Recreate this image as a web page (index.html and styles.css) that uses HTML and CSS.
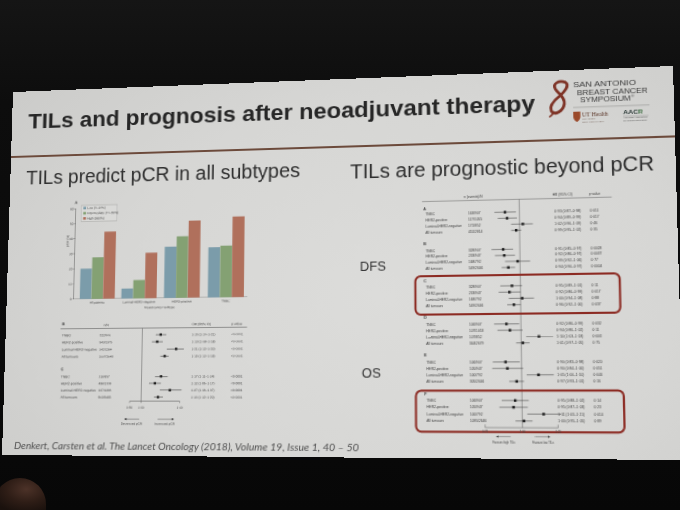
FILE: index.html
```html
<!DOCTYPE html>
<html lang="en">
<head>
<meta charset="utf-8">
<title>TILs and prognosis after neoadjuvant therapy</title>
<link rel="stylesheet" href="styles.css">
</head>
<body>
<div class="slide">
  <div class="header">
    <div class="title">TILs and prognosis after neoadjuvant therapy</div>
    <svg class="logo" viewBox="0 0 92 45">
      <path class="eight" d="M15.5 3 C9 0 3.5 4 6 9 C8.5 14 15 17 14 24 C13 31 5 35.5 2 30.5 C0 26 5 20 10 16 C14 12.5 19.5 6 15.5 3"/>
      <path class="eight-tail" d="M4.5 31.5 C3 34 1.5 35.5 0.5 36"/>
      <text class="lg" x="22.4" y="7.8" textLength="57" lengthAdjust="spacingAndGlyphs">SAN ANTONIO</text>
      <text class="lg" x="25.8" y="15.6" textLength="64" lengthAdjust="spacingAndGlyphs">BREAST CANCER</text>
      <text class="lg" x="28.4" y="23.4" textLength="46" lengthAdjust="spacingAndGlyphs">SYMPOSIUM</text>
      <text class="reg" x="75" y="19.6">®</text>
      <line class="sep" x1="22" y1="27.8" x2="91" y2="27.8"/>
      <path class="shield" d="M22 32 H28.5 V37 C28.5 40 25.25 42 25.25 42 C25.25 42 22 40 22 37 Z"/>
      <text class="ut" x="30" y="37">UT Health</text>
      <text class="uts" x="30" y="39.8">San Antonio</text>
      <text class="uts" x="30" y="42.8">Mays Cancer Center</text>
      <text class="aacr" x="67.2" y="36.3">AAC<tspan class="aacr-r">R</tspan></text>
      <line class="sep2" x1="67" y1="38" x2="90" y2="38"/>
      <text class="aacs" x="67.2" y="40.5">American Association</text>
      <text class="aacs" x="67.2" y="43">for Cancer Research</text>
    </svg>
  </div>
  <div class="rule"></div>
  <div class="columns">
    <div class="col col-left">
      <div class="subtitle">TILs predict pCR in all subtypes</div>
      <svg class="fig fig-left" viewBox="60 195 220 240" preserveAspectRatio="none">
        <text class="pl" x="71.5" y="202.3">A</text>
        <rect class="legend" x="78.3" y="204" width="37" height="16.4"/>
        <rect class="b1" x="80.5" y="205.5" width="2.8" height="2.6"/>
        <text class="lt" x="84.5" y="207.9">Low (0–10%)</text>
        <rect class="b2" x="80.5" y="210.8" width="2.8" height="2.6"/>
        <text class="lt" x="84.5" y="213.2">Intermediate (11–59%)</text>
        <rect class="b3" x="80.5" y="216.1" width="2.8" height="2.6"/>
        <text class="lt" x="84.5" y="218.5">High (≥60%)</text>

        <path class="ax" d="M72.7 207.3 V299.3 H247 M71.5 299.3 H72.7 M71.5 284 H72.7 M71.5 268.6 H72.7 M71.5 253.3 H72.7 M71.5 238 H72.7 M71.5 222.6 H72.7 M71.5 207.3 H72.7"/>
        <g class="yt">
          <text x="70.6" y="300.5">0</text>
          <text x="70.6" y="285.2">10</text>
          <text x="70.6" y="269.8">20</text>
          <text x="70.6" y="254.5">30</text>
          <text x="70.6" y="239.2">40</text>
          <text x="70.6" y="223.8">50</text>
          <text x="70.6" y="208.5">60</text>
        </g>
        <text class="lt" transform="translate(66.2 240) rotate(-90)" text-anchor="middle">pCR (%)</text>

        <rect class="b1" x="79" y="268.63" width="11.8" height="30.67"/>
        <rect class="b2" x="90.9" y="257.29" width="11.6" height="42.01"/>
        <rect class="b3" x="102.7" y="231.37" width="11.9" height="67.93"/>
        <rect class="b1" x="121.3" y="289.33" width="11.8" height="9.97"/>
        <rect class="b2" x="133.2" y="280.9" width="11.6" height="18.4"/>
        <rect class="b3" x="145" y="253.61" width="11.9" height="45.69"/>
        <rect class="b1" x="164.3" y="247.93" width="11.8" height="51.37"/>
        <rect class="b2" x="176.2" y="237.66" width="11.6" height="61.64"/>
        <rect class="b3" x="188" y="222.02" width="11.9" height="77.28"/>
        <rect class="b1" x="208" y="249.31" width="11.8" height="49.99"/>
        <rect class="b2" x="219.9" y="247.93" width="11.6" height="51.37"/>
        <rect class="b3" x="231.7" y="218.95" width="11.9" height="80.35"/>

        <g class="xl">
          <text x="96.8" y="304">All patients</text>
          <text x="139.1" y="304">Luminal-HER2-negative</text>
          <text x="182.1" y="304">HER2-positive</text>
          <text x="225.8" y="304">TNBC</text>
          <text x="160" y="309.6">Breast cancer subtype</text>
        </g>

        <text class="pl" x="61.5" y="325.5">B</text>
        <text class="hd" x="104" y="326.7">n/N</text>
        <text class="hd" x="192.7" y="326.7">OR (95% CI)</text>
        <text class="hd" x="231.7" y="326.7">p value</text>
        <line class="ax" x1="60" y1="329.3" x2="247" y2="329.3"/>
        <line class="ax" x1="143.3" y1="329.3" x2="143.3" y2="401.7"/>

        <g transform="translate(0 335.7)"><text class="t" x="61.7" y="1.2">TNBC</text><text class="n" x="100" y="1.2">322/906</text><text class="n" x="192.7" y="1.2">1·15 (1·10–1·21)</text><text class="n" x="231.7" y="1.2">&lt;0·0001</text><line class="ci" x1="156.7" x2="167.3"/><rect class="mk" x="160.5" y="-1.2" width="2.4" height="2.4"/></g>
        <g transform="translate(0 342.7)"><text class="t" x="61.7" y="1.2">HER2-positive</text><text class="n" x="100" y="1.2">543/1375</text><text class="n" x="192.7" y="1.2">1·13 (1·08–1·18)</text><text class="n" x="231.7" y="1.2">&lt;0·0001</text><line class="ci" x1="153" x2="164"/><rect class="mk" x="157.1" y="-1.2" width="2.4" height="2.4"/></g>
        <g transform="translate(0 350)"><text class="t" x="61.7" y="1.2">Luminal-HER2-negative</text><text class="n" x="100" y="1.2">142/1364</text><text class="n" x="192.7" y="1.2">1·21 (1·12–1·30)</text><text class="n" x="231.7" y="1.2">&lt;0·0001</text><line class="ci" x1="168" x2="185"/><rect class="mk" x="176.1" y="-1.2" width="2.4" height="2.4"/></g>
        <g transform="translate(0 357)"><text class="t" x="61.7" y="1.2">All tumours</text><text class="n" x="100" y="1.2">1007/3645</text><text class="n" x="192.7" y="1.2">1·15 (1·12–1·18)</text><text class="n" x="231.7" y="1.2">&lt;0·0001</text><line class="ci" x1="161.7" x2="170"/><rect class="mk" x="164.8" y="-1.2" width="2.4" height="2.4"/></g>

        <text class="pl" x="61.5" y="371">C</text>
        <g transform="translate(0 377)"><text class="t" x="61.7" y="1.2">TNBC</text><text class="n" x="100" y="1.2">318/857</text><text class="n" x="192.7" y="1.2">1·17 (1·11–1·24)</text><text class="n" x="231.7" y="1.2">&lt;0·0001</text><line class="ci" x1="156.7" x2="169.3"/><rect class="mk" x="161.5" y="-1.2" width="2.4" height="2.4"/></g>
        <g transform="translate(0 383.8)"><text class="t" x="61.7" y="1.2">HER2-positive</text><text class="n" x="100" y="1.2">498/1338</text><text class="n" x="192.7" y="1.2">1·12 (1·06–1·17)</text><text class="n" x="231.7" y="1.2">&lt;0·0001</text><line class="ci" x1="150.7" x2="162.7"/><rect class="mk" x="155.5" y="-1.2" width="2.4" height="2.4"/></g>
        <g transform="translate(0 390.6)"><text class="t" x="61.7" y="1.2">Luminal-HER2-negative</text><text class="n" x="100" y="1.2">137/1288</text><text class="n" x="192.7" y="1.2">1·27 (1·18–1·37)</text><text class="n" x="231.7" y="1.2">&lt;0·0001</text><line class="ci" x1="161.7" x2="183.3"/><rect class="mk" x="170.5" y="-1.2" width="2.4" height="2.4"/></g>
        <g transform="translate(0 397.4)"><text class="t" x="61.7" y="1.2">All tumours</text><text class="n" x="100" y="1.2">953/3483</text><text class="n" x="192.7" y="1.2">1·16 (1·12–1·20)</text><text class="n" x="231.7" y="1.2">&lt;0·0001</text><line class="ci" x1="156" x2="165"/><rect class="mk" x="158.8" y="-1.2" width="2.4" height="2.4"/></g>

        <path class="ax" d="M131.7 401.7 H181.7 M131.7 401.7 V403.2 M143.3 401.7 V403.2 M181.7 401.7 V403.2"/>
        <g class="xt">
          <text x="131.7" y="408.6">0·80</text>
          <text x="143.3" y="408.6">1·00</text>
          <text x="181.7" y="408.6">1·40</text>
        </g>
        <line class="ax" x1="128" y1="419" x2="141.7" y2="419"/>
        <polygon class="ah" points="126.5,419 129,417.9 129,420.1"/>
        <line class="ax" x1="160" y1="419" x2="175" y2="419"/>
        <polygon class="ah" points="176.5,419 174,417.9 174,420.1"/>
        <g class="xt">
          <text x="134" y="424.6">Decreased pCR</text>
          <text x="167" y="424.6">Increased pCR</text>
        </g>
      </svg>
      <div class="cite">Denkert, Carsten et al. The Lancet Oncology (2018), Volume 19, Issue 1, 40 – 50</div>
    </div>
    <div class="col col-right">
      <div class="subtitle">TILs are prognostic beyond pCR</div>
      <svg class="fig fig-right" viewBox="350 188 280 262" preserveAspectRatio="none">
        <text class="big" x="359" y="270">DFS</text>
        <text class="big" x="361" y="378">OS</text>

        <text class="rh" x="466" y="197.3">n (events)/N</text>
        <text class="rh" x="555" y="197.3">HR (95% CI)</text>
        <text class="rh" x="591" y="197.3">p value</text>
        <line class="ax" x1="423.3" y1="200" x2="613.3" y2="200"/>
        <line class="ax" x1="521.7" y1="200" x2="521.7" y2="427.3"/>

        <text class="rp" x="424.5" y="208.7">A</text>
        <g transform="translate(0 212.7)"><text class="r" x="426.7" y="1.3">TNBC</text><text class="r" x="470" y="1.3">163/907</text><text class="r" x="556.7" y="1.3">0·93 (0·87–0·98)</text><text class="r" x="591.7" y="1.3">0·011</text><line class="ci" x1="496.7" x2="518.3"/><rect class="mk" x="506" y="-1.3" width="2.6" height="2.6"/></g>
        <g transform="translate(0 218.9)"><text class="r" x="426.7" y="1.3">HER2-positive</text><text class="r" x="470" y="1.3">117/1055</text><text class="r" x="556.7" y="1.3">0·94 (0·89–0·99)</text><text class="r" x="591.7" y="1.3">0·017</text><line class="ci" x1="500" x2="519.3"/><rect class="mk" x="508" y="-1.3" width="2.6" height="2.6"/></g>
        <g transform="translate(0 225.1)"><text class="r" x="426.7" y="1.3">Luminal-HER2-negative</text><text class="r" x="470" y="1.3">171/852</text><text class="r" x="556.7" y="1.3">1·02 (0·96–1·09)</text><text class="r" x="591.7" y="1.3">0·46</text><line class="ci" x1="513.3" x2="535"/><rect class="mk" x="523.7" y="-1.3" width="2.6" height="2.6"/></g>
        <g transform="translate(0 231.3)"><text class="r" x="426.7" y="1.3">All tumours</text><text class="r" x="470" y="1.3">451/2814</text><text class="r" x="556.7" y="1.3">0·99 (0·95–1·02)</text><text class="r" x="591.7" y="1.3">0·35</text><line class="ci" x1="513.3" x2="523.3"/><rect class="mk" x="517" y="-1.3" width="2.6" height="2.6"/></g>

        <text class="rp" x="424.5" y="245">B</text>
        <g transform="translate(0 250.3)"><text class="r" x="426.7" y="1.3">TNBC</text><text class="r" x="470" y="1.3">328/907</text><text class="r" x="556.7" y="1.3">0·91 (0·85–0·97)</text><text class="r" x="591.7" y="1.3">0·0028</text><line class="ci" x1="493.3" x2="515"/><rect class="mk" x="503.7" y="-1.3" width="2.6" height="2.6"/></g>
        <g transform="translate(0 256.4)"><text class="r" x="426.7" y="1.3">HER2-positive</text><text class="r" x="470" y="1.3">233/947</text><text class="r" x="556.7" y="1.3">0·92 (0·86–0·97)</text><text class="r" x="591.7" y="1.3">0·0037</text><line class="ci" x1="496.7" x2="516.7"/><rect class="mk" x="504.7" y="-1.3" width="2.6" height="2.6"/></g>
        <g transform="translate(0 262.5)"><text class="r" x="426.7" y="1.3">Luminal-HER2-negative</text><text class="r" x="470" y="1.3">168/792</text><text class="r" x="556.7" y="1.3">0·99 (0·92–1·06)</text><text class="r" x="591.7" y="1.3">0·77</text><line class="ci" x1="506.7" x2="531.7"/><rect class="mk" x="518" y="-1.3" width="2.6" height="2.6"/></g>
        <g transform="translate(0 268.6)"><text class="r" x="426.7" y="1.3">All tumours</text><text class="r" x="470" y="1.3">549/2646</text><text class="r" x="556.7" y="1.3">0·94 (0·90–0·97)</text><text class="r" x="591.7" y="1.3">0·0004</text><line class="ci" x1="503.3" x2="516.7"/><rect class="mk" x="508.7" y="-1.3" width="2.6" height="2.6"/></g>

        <rect class="box" x="416" y="276" width="203.3" height="39" rx="5.5"/>
        <text class="rp" x="424.5" y="282">C</text>
        <g transform="translate(0 287)"><text class="r" x="426.7" y="1.3">TNBC</text><text class="r" x="470" y="1.3">328/907</text><text class="r" x="556.7" y="1.3">0·95 (0·89–1·01)</text><text class="r" x="591.7" y="1.3">0·11</text><line class="ci" x1="501.7" x2="523.3"/><rect class="mk" x="512" y="-1.3" width="2.6" height="2.6"/></g>
        <g transform="translate(0 293.3)"><text class="r" x="426.7" y="1.3">HER2-positive</text><text class="r" x="470" y="1.3">233/947</text><text class="r" x="556.7" y="1.3">0·92 (0·86–0·99)</text><text class="r" x="591.7" y="1.3">0·017</text><line class="ci" x1="500" x2="521.7"/><rect class="mk" x="509.4" y="-1.3" width="2.6" height="2.6"/></g>
        <g transform="translate(0 299.6)"><text class="r" x="426.7" y="1.3">Luminal-HER2-negative</text><text class="r" x="470" y="1.3">168/792</text><text class="r" x="556.7" y="1.3">1·00 (0·94–1·08)</text><text class="r" x="591.7" y="1.3">0·88</text><line class="ci" x1="510" x2="535"/><rect class="mk" x="522" y="-1.3" width="2.6" height="2.6"/></g>
        <g transform="translate(0 305.9)"><text class="r" x="426.7" y="1.3">All tumours</text><text class="r" x="470" y="1.3">549/2646</text><text class="r" x="556.7" y="1.3">0·96 (0·92–1·00)</text><text class="r" x="591.7" y="1.3">0·037</text><line class="ci" x1="508.3" x2="521.7"/><rect class="mk" x="513.7" y="-1.3" width="2.6" height="2.6"/></g>

        <text class="rp" x="424.5" y="319">D</text>
        <g transform="translate(0 325)"><text class="r" x="426.7" y="1.3">TNBC</text><text class="r" x="470" y="1.3">106/907</text><text class="r" x="556.7" y="1.3">0·92 (0·86–0·99)</text><text class="r" x="591.7" y="1.3">0·032</text><line class="ci" x1="495" x2="520"/><rect class="mk" x="506" y="-1.3" width="2.6" height="2.6"/></g>
        <g transform="translate(0 331.3)"><text class="r" x="426.7" y="1.3">HER2-positive</text><text class="r" x="470" y="1.3">107/1053</text><text class="r" x="556.7" y="1.3">0·94 (0·86–1·02)</text><text class="r" x="591.7" y="1.3">0·11</text><line class="ci" x1="498.3" x2="523.3"/><rect class="mk" x="509.4" y="-1.3" width="2.6" height="2.6"/></g>
        <g transform="translate(0 337.6)"><text class="r" x="426.7" y="1.3">Luminal-HER2-negative</text><text class="r" x="470" y="1.3">107/852</text><text class="r" x="556.7" y="1.3">1·10 (1·03–1·18)</text><text class="r" x="591.7" y="1.3">0·003</text><line class="ci" x1="526.7" x2="553.3"/><rect class="mk" x="538" y="-1.3" width="2.6" height="2.6"/></g>
        <g transform="translate(0 343.9)"><text class="r" x="426.7" y="1.3">All tumours</text><text class="r" x="470" y="1.3">344/2679</text><text class="r" x="556.7" y="1.3">1·01 (0·97–1·05)</text><text class="r" x="591.7" y="1.3">0·75</text><line class="ci" x1="516.7" x2="530"/><rect class="mk" x="522" y="-1.3" width="2.6" height="2.6"/></g>

        <text class="rp" x="424.5" y="356.7">E</text>
        <g transform="translate(0 362.7)"><text class="r" x="426.7" y="1.3">TNBC</text><text class="r" x="470" y="1.3">106/907</text><text class="r" x="556.7" y="1.3">0·90 (0·83–0·98)</text><text class="r" x="591.7" y="1.3">0·020</text><line class="ci" x1="493.3" x2="520"/><rect class="mk" x="504.7" y="-1.3" width="2.6" height="2.6"/></g>
        <g transform="translate(0 369.1)"><text class="r" x="426.7" y="1.3">HER2-positive</text><text class="r" x="470" y="1.3">105/947</text><text class="r" x="556.7" y="1.3">0·90 (0·84–1·00)</text><text class="r" x="591.7" y="1.3">0·051</text><line class="ci" x1="492.7" x2="523.3"/><rect class="mk" x="506.4" y="-1.3" width="2.6" height="2.6"/></g>
        <g transform="translate(0 375.5)"><text class="r" x="426.7" y="1.3">Luminal-HER2-negative</text><text class="r" x="470" y="1.3">100/792</text><text class="r" x="556.7" y="1.3">1·05 (1·00–1·10)</text><text class="r" x="591.7" y="1.3">0·044</text><line class="ci" x1="526.7" x2="553.3"/><rect class="mk" x="537" y="-1.3" width="2.6" height="2.6"/></g>
        <g transform="translate(0 381.9)"><text class="r" x="426.7" y="1.3">All tumours</text><text class="r" x="470" y="1.3">305/2646</text><text class="r" x="556.7" y="1.3">0·97 (0·93–1·01)</text><text class="r" x="591.7" y="1.3">0·16</text><line class="ci" x1="509.3" x2="524"/><rect class="mk" x="515.4" y="-1.3" width="2.6" height="2.6"/></g>

        <rect class="box" x="416" y="391" width="204.7" height="40.7" rx="5.5"/>
        <text class="rp" x="424.5" y="396">F</text>
        <g transform="translate(0 400.7)"><text class="r" x="426.7" y="1.3">TNBC</text><text class="r" x="470" y="1.3">106/907</text><text class="r" x="556.7" y="1.3">0·95 (0·88–1·02)</text><text class="r" x="591.7" y="1.3">0·14</text><line class="ci" x1="501.7" x2="528.3"/><rect class="mk" x="513.7" y="-1.3" width="2.6" height="2.6"/></g>
        <g transform="translate(0 407.3)"><text class="r" x="426.7" y="1.3">HER2-positive</text><text class="r" x="470" y="1.3">105/947</text><text class="r" x="556.7" y="1.3">0·95 (0·87–1·03)</text><text class="r" x="591.7" y="1.3">0·23</text><line class="ci" x1="499.3" x2="527.3"/><rect class="mk" x="512" y="-1.3" width="2.6" height="2.6"/></g>
        <g transform="translate(0 414)"><text class="r" x="426.7" y="1.3">Luminal-HER2-negative</text><text class="r" x="470" y="1.3">100/792</text><text class="r" x="556.7" y="1.3">1·11 (1·03–1·21)</text><text class="r" x="591.7" y="1.3">0·014</text><line class="ci" x1="526.7" x2="560"/><rect class="mk" x="541.4" y="-1.3" width="2.6" height="2.6"/></g>
        <g transform="translate(0 420.7)"><text class="r" x="426.7" y="1.3">All tumours</text><text class="r" x="470" y="1.3">1095/2646</text><text class="r" x="556.7" y="1.3">1·00 (0·95–1·05)</text><text class="r" x="591.7" y="1.3">0·89</text><line class="ci" x1="515" x2="531.7"/><rect class="mk" x="522" y="-1.3" width="2.6" height="2.6"/></g>

        <path class="ax" d="M485 424.3 V427.3 H556.7 V424.3"/>
        <g class="rt">
          <text x="485" y="432">0·75</text>
          <text x="521.7" y="432">1·00</text>
          <text x="556.7" y="432">1·25</text>
        </g>
        <line class="ax" x1="497" y1="436" x2="510" y2="436"/>
        <polygon class="ah" points="495.5,436 498,434.9 498,437.1"/>
        <line class="ax" x1="534" y1="436" x2="547.5" y2="436"/>
        <polygon class="ah" points="549,436 546.5,434.9 546.5,437.1"/>
        <g class="rt">
          <text x="503.3" y="442.5">Favours high TILs</text>
          <text x="541.7" y="442.5">Favours low TILs</text>
        </g>
      </svg>
    </div>
  </div>
</div>
<div class="audience"></div>
</body>
</html>
```

FILE: styles.css
```css
html, body {
  margin: 0;
  padding: 0;
  width: 680px;
  height: 510px;
  overflow: hidden;
}

body {
  background: linear-gradient(180deg, #151515 0%, #0d0d0d 20%, #0a0a0a 70%, #070707 100%);
}

.slide {
  width: 640px;
  height: 370px;
  transform-origin: 0 0;
  transform: matrix3d(0.948927, -0.048698, 0, -0.00012232, -0.029897, 0.942965, 0, -0.00008377, 0, 0, 1, 0, 13, 92, 0, 1);
  background: radial-gradient(ellipse 75% 95% at 58% 58%, #dcdcda 0%, #d6d6d4 55%, #cbcbc9 100%);
  display: flex;
  flex-direction: column;
  font-family: "Liberation Sans", Arial, sans-serif;
  color: #2c2c2c;
}

.header {
  display: flex;
  align-items: flex-start;
  height: 66.5px;
  flex: none;
}

.title {
  margin: 16.8px 0 0 17px;
  font-size: 22.9px;
  font-weight: bold;
  line-height: 28px;
  white-space: nowrap;
  color: #262626;
}

.logo {
  margin: 9px 21px 0 auto;
  width: 92px;
  height: 45px;
  flex: none;
  overflow: visible;
}

.logo .eight {
  fill: none;
  stroke: #7e3326;
  stroke-width: 2.7;
  stroke-linecap: round;
  stroke-linejoin: round;
}

.logo .eight-tail {
  fill: none;
  stroke: #7e3326;
  stroke-width: 1.6;
  stroke-linecap: round;
}

.logo .lg {
  font-family: "Liberation Sans", Arial, sans-serif;
  font-size: 8px;
  fill: #3b3b3b;
}

.logo .reg {
  font-family: "Liberation Sans", Arial, sans-serif;
  font-size: 3.5px;
  fill: #3b3b3b;
}

.logo .sep {
  stroke: #8a8a88;
  stroke-width: 0.5;
}

.logo .sep2 {
  stroke: #666;
  stroke-width: 0.3;
}

.logo .shield {
  fill: #9b4a2b;
}

.logo .ut {
  font-family: "Liberation Serif", "Times New Roman", serif;
  font-size: 5.6px;
  fill: #5e3a2c;
}

.logo .uts {
  font-family: "Liberation Serif", "Times New Roman", serif;
  font-size: 2.4px;
  fill: #6e5a50;
}

.logo .aacr {
  font-family: "Liberation Sans", Arial, sans-serif;
  font-size: 6.2px;
  font-weight: bold;
  fill: #2c3a38;
}

.logo .aacr-r {
  fill: #3f6f43;
}

.logo .aacs {
  font-family: "Liberation Sans", Arial, sans-serif;
  font-size: 2.3px;
  fill: #555;
}

.rule {
  height: 2px;
  flex: none;
  background: #6c4a3b;
}

.columns {
  display: grid;
  grid-template-columns: 340px 300px;
  flex: 1;
  min-height: 0;
}

.col {
  display: flex;
  flex-direction: column;
  min-width: 0;
}

.subtitle {
  font-size: 19.5px;
  line-height: 24px;
  white-space: nowrap;
  color: #2e2e2e;
}

.col-left .subtitle {
  margin: 9.7px 0 0 16.5px;
}

.col-right .subtitle {
  margin: 12.7px 0 0 0;
}

.fig {
  display: block;
  flex: none;
  overflow: visible;
}

.fig-left {
  margin: 8.9px 0 0 55.5px;
  width: 218px;
  height: 239px;
}

.fig-right {
  margin: 7.8px 0 0 1.1px;
  width: 256.5px;
  height: 249.8px;
}

.cite {
  margin: 3.8px 0 0 12px;
  font-family: Lato, "Open Sans", sans-serif;
  font-style: italic;
  font-size: 10.1px;
  line-height: 13px;
  color: #515151;
  white-space: nowrap;
}

/* chart styling */
.fig text {
  font-family: "Liberation Sans", Arial, sans-serif;
  fill: #404040;
}

.fig .pl {
  font-size: 4px;
  font-weight: bold;
}

.fig .lt {
  font-size: 3.2px;
}

.fig .legend {
  fill: #d9d9d7;
  stroke: #a2a2a0;
  stroke-width: 0.35;
}

.fig .b1 { fill: #7b9caa; }
.fig .b2 { fill: #84a173; }
.fig .b3 { fill: #b0705c; }

.fig .ax {
  stroke: #4a4a4a;
  stroke-width: 0.45;
  fill: none;
}

.fig .yt text {
  font-size: 3.2px;
  text-anchor: end;
}

.fig .xl text {
  font-size: 3.1px;
  text-anchor: middle;
}

.fig .xt text {
  font-size: 3px;
  text-anchor: middle;
}

.fig .hd {
  font-size: 3.3px;
}

.fig .t {
  font-size: 3.4px;
}

.fig .n {
  font-size: 3.1px;
}

.fig .ci {
  stroke: #2a2a2a;
  stroke-width: 0.5;
}

.fig .mk {
  fill: #1e1e1e;
}

.fig .ah {
  fill: #3a3a3a;
}

.fig .big {
  font-size: 13.5px;
  fill: #303030;
}

.fig .rh {
  font-size: 3.5px;
}

.fig .rp {
  font-size: 3.9px;
  font-weight: bold;
}

.fig .r {
  font-size: 3.5px;
}

.fig .rt text {
  font-size: 2.8px;
  text-anchor: middle;
}

.fig .box {
  fill: none;
  stroke: #8c2b23;
  stroke-width: 2.1;
}

.audience {
  margin: 108px 0 0 -6px;
  width: 52px;
  height: 40px;
  border-radius: 50% 50% 0 0 / 65% 65% 0 0;
  background: radial-gradient(ellipse 70% 60% at 62% 28%, #4c3228 0%, #2e1d16 55%, #1a110d 100%);
}
```
